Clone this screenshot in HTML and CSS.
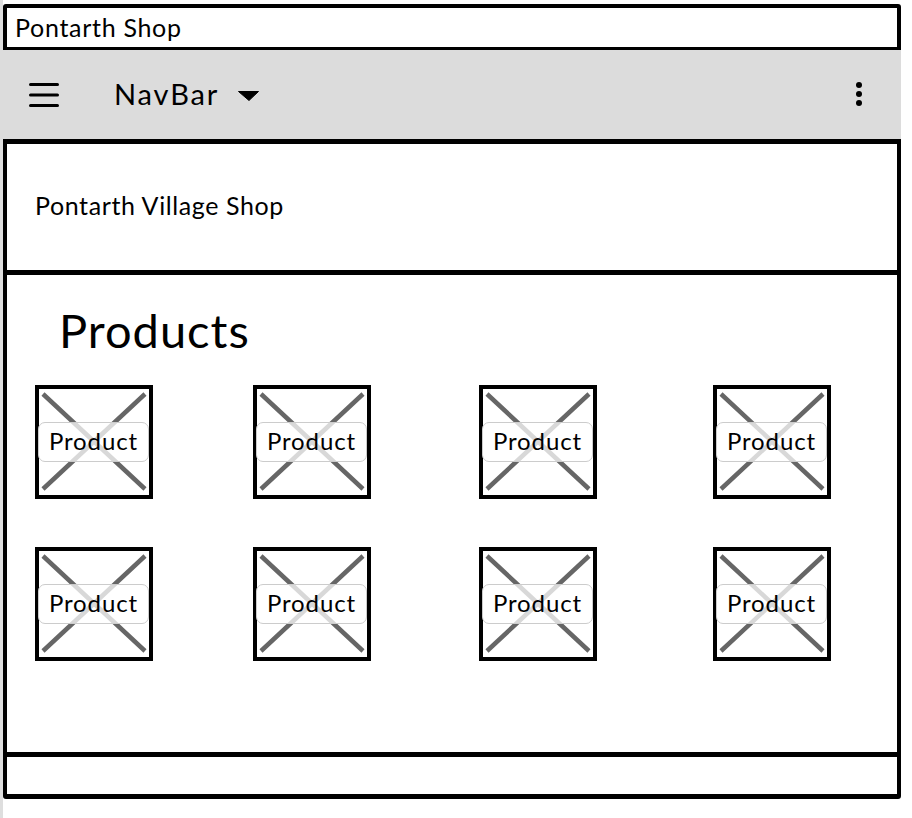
FILE: index.html
```html
<!DOCTYPE html>
<html>
<head>
<meta charset="utf-8">
<link rel="stylesheet" href="styles.css">
</head>
<body>
<div class="page">
  <div class="titlebar">Pontarth Shop</div>
  <div class="navbar">
    <svg class="burger" width="30" height="26" viewBox="0 0 30 26"><path d="M1.5 2.5H28.5M1.5 13H28.5M1.5 23.5H28.5" stroke="#000" stroke-width="3" stroke-linecap="round"/></svg>
    <span class="brand">NavBar</span>
    <svg class="caret" width="21" height="10" viewBox="0 0 21 10"><path d="M0.5 0.5H20.5L11 9.5Z" fill="#000" stroke="#000" stroke-linejoin="round"/></svg>
    <span class="spacer"></span>
    <svg class="kebab" width="8" height="26" viewBox="0 0 8 26"><circle cx="4" cy="4" r="3"/><circle cx="4" cy="13" r="3"/><circle cx="4" cy="22" r="3"/></svg>
  </div>
  <div class="header">Pontarth Village Shop</div>
  <div class="content">
    <h1 class="heading">Products</h1>
    <div class="grid">
      <div class="card"><svg class="x" viewBox="0 0 110 106" preserveAspectRatio="none"><path d="M4 5L106 100M106 5L4 100" stroke="#666" stroke-width="4.5"/></svg><span class="label">Product</span></div>
      <div class="card"><svg class="x" viewBox="0 0 110 106" preserveAspectRatio="none"><path d="M4 5L106 100M106 5L4 100" stroke="#666" stroke-width="4.5"/></svg><span class="label">Product</span></div>
      <div class="card"><svg class="x" viewBox="0 0 110 106" preserveAspectRatio="none"><path d="M4 5L106 100M106 5L4 100" stroke="#666" stroke-width="4.5"/></svg><span class="label">Product</span></div>
      <div class="card"><svg class="x" viewBox="0 0 110 106" preserveAspectRatio="none"><path d="M4 5L106 100M106 5L4 100" stroke="#666" stroke-width="4.5"/></svg><span class="label">Product</span></div>
      <div class="card"><svg class="x" viewBox="0 0 110 106" preserveAspectRatio="none"><path d="M4 5L106 100M106 5L4 100" stroke="#666" stroke-width="4.5"/></svg><span class="label">Product</span></div>
      <div class="card"><svg class="x" viewBox="0 0 110 106" preserveAspectRatio="none"><path d="M4 5L106 100M106 5L4 100" stroke="#666" stroke-width="4.5"/></svg><span class="label">Product</span></div>
      <div class="card"><svg class="x" viewBox="0 0 110 106" preserveAspectRatio="none"><path d="M4 5L106 100M106 5L4 100" stroke="#666" stroke-width="4.5"/></svg><span class="label">Product</span></div>
      <div class="card"><svg class="x" viewBox="0 0 110 106" preserveAspectRatio="none"><path d="M4 5L106 100M106 5L4 100" stroke="#666" stroke-width="4.5"/></svg><span class="label">Product</span></div>
    </div>
  </div>
  <div class="footer"></div>
</div>
</body>
</html>
```
FILE: styles.css
```css
* { box-sizing: border-box; }
html, body { margin: 0; padding: 0; }
body {
  font-family: Lato, "Noto Sans", sans-serif;
  color: #000;
  width: 912px;
  height: 818px;
  overflow: hidden;
  background: linear-gradient(to right, #dedede 0, #dedede 3px, #fff 3px);
}
.page {
  width: 898px;
  padding-top: 4px;
  margin-left: 3px;
  background: #fff;
}
.titlebar {
  height: 46px;
  border: 4px solid #000;
  border-bottom-width: 3px;
  border-radius: 3px 3px 0 0;
  font-size: 25px;
  letter-spacing: 0.7px;
  line-height: 39px;
  padding-left: 8px;
}
.navbar {
  height: 89px;
  margin-left: -3px;
  width: 901px;
  background: #dcdcdc;
  display: flex;
  align-items: center;
  padding-left: 29px;
  padding-right: 38px;
}
.burger { display: block; margin-top: 0; }
.brand {
  font-size: 29px;
  letter-spacing: 1.9px;
  margin-left: 55px;
  line-height: 1;
  margin-top: -3px;
}
.caret { display: block; margin-left: 19px; margin-top: 3px; }
.spacer { flex: 1; }
.kebab { display: block; margin-top: -1px; }
.header {
  height: 131px;
  border: 4px solid #000;
  border-top-width: 5px;
  border-bottom: none;
  font-size: 25px;
  letter-spacing: 0.6px;
  display: flex;
  align-items: center;
  padding-left: 28px;
  padding-bottom: 4px;
}
.content {
  height: 482px;
  border: 4px solid #000;
  border-top-width: 5px;
  border-bottom: none;
  padding: 27px 0 0 28px;
}
.heading {
  margin: 0 0 27px 24px;
  font-size: 47px;
  font-weight: 400;
  letter-spacing: 1px;
  line-height: 56px;
}
.grid {
  display: grid;
  grid-template-columns: 218px 226px 234px 118px;
  grid-auto-rows: 115px;
  row-gap: 47px;
}
.card {
  position: relative;
  width: 118px;
  height: 114px;
  border: 4px solid #000;
  background: #fff;
}
.x {
  position: absolute;
  left: 0; top: 0;
  width: 110px;
  height: 106px;
}
.label {
  position: absolute;
  left: -1px;
  top: 33px;
  width: 111px;
  height: 40px;
  border: 1.5px solid #ccc;
  border-radius: 7px;
  background: rgba(255,255,255,0.75);
  font-size: 24px;
  letter-spacing: 0.9px;
  line-height: 36px;
  text-align: center;
}
.footer {
  height: 47px;
  border: 4px solid #000;
  border-top-width: 5px;
  border-bottom-width: 5px;
  border-radius: 0 0 3px 3px;
}
```
